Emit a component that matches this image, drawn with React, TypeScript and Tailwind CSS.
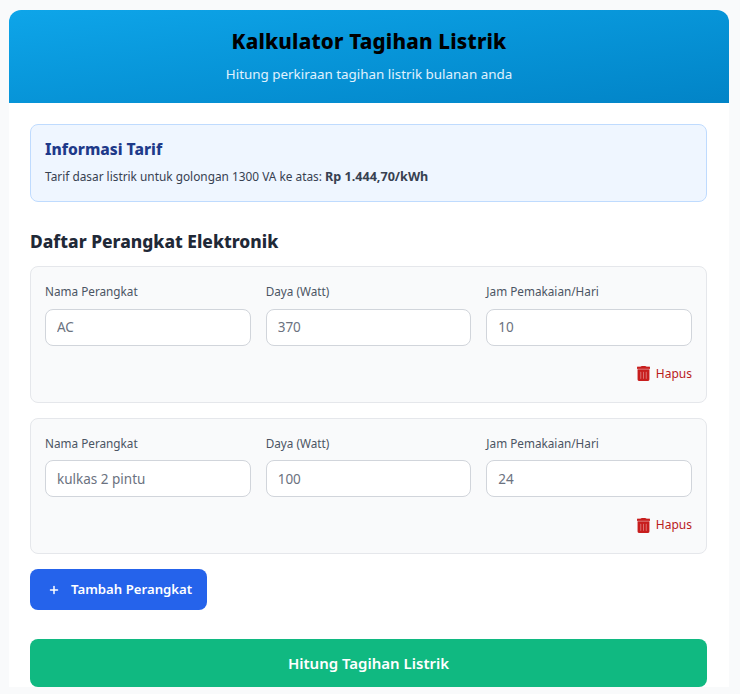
import { Plus } from "lucide-react";
import { FaTrashAlt } from "react-icons/fa";

const devices = [
  { name: "AC", watt: "370", hours: "10" },
  { name: "kulkas 2 pintu", watt: "100", hours: "24" },
];

function Field({ label, value }: { label: string; value: string }) {
  return (
    <div className="flex flex-col">
      <label className="mb-[7.6px] h-[19px] text-[11.75px] leading-[19px] text-[#4b5563]">
        {label}
      </label>
      <input
        readOnly
        value={value}
        className="h-[37px] w-full rounded-lg border border-[#d1d5db] bg-white px-[11px] text-[13.5px] text-[#6b7280] outline-none"
      />
    </div>
  );
}

export default function App() {
  return (
    <div className="h-[694px] overflow-hidden bg-[#f9fafb] pt-[10px] pl-[9px] font-['Noto_Sans',sans-serif]">
      <div className="w-[720px] overflow-hidden rounded-t-xl bg-white">
        <header className="flex h-[93px] flex-col items-center bg-gradient-to-br from-[#0ea5e9] to-[#0284c7] pt-[17px]">
          <h1 className="text-[20.6px] leading-[28px] font-extrabold tracking-[0.2px] text-black">
            Kalkulator Tagihan Listrik
          </h1>
          <p className="mt-[9px] text-[13.4px] leading-[20px] text-[#e0f2fe]">
            Hitung perkiraan tagihan listrik bulanan anda
          </p>
        </header>

        <main className="px-[21px] pt-[21px]">
          <section className="h-[78px] w-[677px] rounded-lg border border-[#bfdbfe] bg-[#eff6ff] px-[14px] pt-[13px]">
            <h2 className="text-[15.6px] leading-[22px] font-extrabold text-[#1e3a8a]">
              Informasi Tarif
            </h2>
            <p className="mt-[7px] text-[11.85px] leading-[18px] text-[#374151]">
              Tarif dasar listrik untuk golongan 1300 VA ke atas:{" "}
              <strong className="text-[12.6px] font-bold">Rp 1.444,70/kWh</strong>
            </p>
          </section>

          <h2 className="mt-[27px] mb-[13px] text-[17.4px] leading-[24px] font-extrabold text-[#1f2937]">
            Daftar Perangkat Elektronik
          </h2>

          <div className="flex w-[677px] flex-col gap-[15px]">
            {devices.map((device) => (
              <div
                key={device.name}
                className="h-[136.5px] rounded-lg border border-[#e5e7eb] bg-[#f9fafb] px-[14px] pt-[15px]"
              >
                <div className="grid grid-cols-3 gap-[15px]">
                  <Field label="Nama Perangkat" value={device.name} />
                  <Field label="Daya (Watt)" value={device.watt} />
                  <Field label="Jam Pemakaian/Hari" value={device.hours} />
                </div>
                <div className="mt-[19.4px] flex items-center justify-end gap-[6px]">
                  <FaTrashAlt className="h-[15px] w-[13px] stroke-[24] text-[#c81e1e]" />
                  <span className="text-[12px] leading-[18px] text-[#b91c1c]">Hapus</span>
                </div>
              </div>
            ))}
          </div>

          <button className="mt-[15px] flex h-[41px] w-[177px] items-center rounded-lg bg-[#2563eb] pt-[1px] pl-[18px] text-[13.2px] font-semibold text-white">
            <Plus className="mr-[11px] h-[12px] w-[12px]" strokeWidth={3} />
            Tambah Perangkat
          </button>

          <button className="mt-[29px] flex h-[48px] w-[677px] items-center justify-center rounded-lg bg-[#10b981] text-[15px] font-semibold text-white">
            Hitung Tagihan Listrik
          </button>
        </main>
      </div>
    </div>
  );
}
